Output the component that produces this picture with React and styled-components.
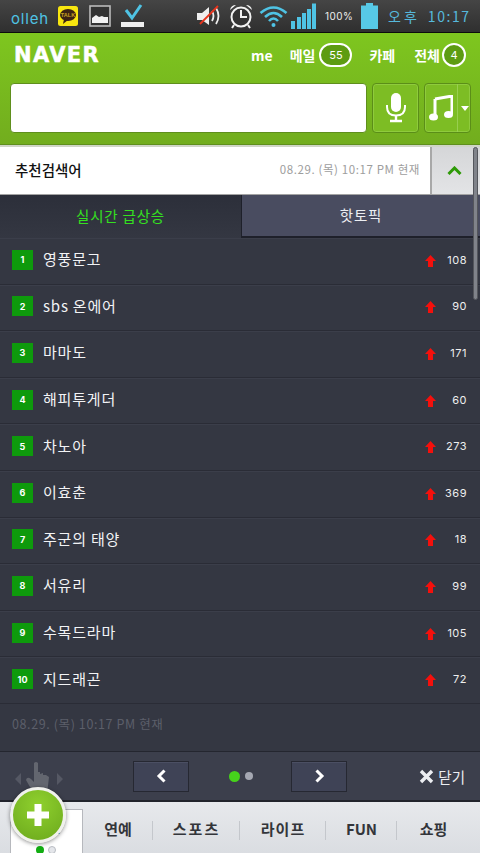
import React from "react";
import styled, { createGlobalStyle } from "styled-components";

const Global = createGlobalStyle`
  html, body { margin: 0; padding: 0; background: #343742; }
  * { box-sizing: border-box; }
  body { font-family: "Noto Sans CJK KR", "Noto Sans", sans-serif; }
`;
const Page = styled.div`
  position: relative; width: 480px; height: 853px; overflow: hidden;
  display: flex; flex-direction: column; background: #343742;
`;
const StatusBar = styled.div`
  height: 33px; flex: none; display: flex; align-items: center; padding: 0 0 0 11px;
  background: linear-gradient(#454545, #2f2f2f); border-bottom: 1px solid #0c0c0c;
`;
const StatusLogo = styled.span`
  font: 400 15px "Inter", sans-serif; color: #4fc3e4; letter-spacing: .8px; width: 47px; flex: none; margin-top: 4px;
`;
const StatusIcon = styled.svg`flex: none; display: block; margin-left: ${p => p.$ml || 0}px;`;
const Pct = styled.span`font: 400 10px "Inter", sans-serif; color: #eee; flex: none; width: 44px; padding-left: 8px; letter-spacing: .4px; white-space: nowrap;`;
const Clock = styled.span`font: 400 14px "Noto Sans CJK KR", sans-serif; color: #56b9dc; letter-spacing: 1.6px; margin-left: 10px; white-space: nowrap; flex: none;`;
const ClockAmPm = styled.span`letter-spacing: 3px; margin-right: 8px;`;

const Header = styled.header`
  height: 112px; flex: none; padding: 4px 9px 0 10px;
  background: linear-gradient(#7ec61f, #72ad1e); border-bottom: 1px solid #5f8f1d;
`;
const TopRow = styled.div`display: flex; align-items: center; justify-content: space-between; height: 36px;`;
const Logo = styled.div`font: 700 21px "DejaVu Sans", sans-serif; color: #fff; letter-spacing: 1.4px; margin: 0 0 0 4px; -webkit-text-stroke: .5px #fff;`;
const TopLinks = styled.nav`display: flex; align-items: center; color: #fff; font-size: 14px; font-weight: 700; margin-right: 5px;`;
const TopLink = styled.span`margin-left: ${p => p.$ml}px; display: flex; align-items: center; white-space: nowrap;`;
const Count = styled.span`
  display: inline-flex; align-items: center; justify-content: center; height: 24px; width: ${p => p.$w}px;
  border: 2px solid #fff; border-radius: 12px; background: #5d9c12; font: 400 11px "Inter", sans-serif; margin-left: ${p => p.$ml}px;
`;
const SearchRow = styled.div`display: flex; gap: 5px; margin-top: 10px; height: 50px;`;
const SearchInput = styled.div`flex: 1; background: #fff; border: 1px solid #5f8f1d; border-radius: 4px;`;
const SearchBtn = styled.div`
  width: 47px; flex: none; display: flex; align-items: center; justify-content: center;
  background: #7dbd24; border: 1px solid #5b8e18; border-radius: 4px; box-shadow: inset 0 0 0 1px #8fcb3d;
`;
const MusicBtn = styled(SearchBtn)`justify-content: flex-start;`;
const MusicMain = styled.div`width: 33px; display: flex; justify-content: center; border-right: 1px solid #98cf50; height: 100%; align-items: center;`;
const Caret = styled.span`margin-left: 3px; width: 0; height: 0; border: 4px solid transparent; border-top: 5px solid #fff; border-bottom: 0;`;

const Suggest = styled.div`
  height: 50px; flex: none; display: flex; align-items: stretch; background: #fff;
  border-top: 2px solid #cfd5c6; border-bottom: 1px solid #a3a3a3;
`;
const SuggestTitle = styled.div`font-size: 14.5px; font-weight: 500; color: #111; padding-left: 15px; line-height: 45px; flex: 1;`;
const Stamp = styled.div`font: 400 ${p => p.$size || 11.5}px "Noto Sans CJK KR", sans-serif; color: ${p => p.$c || "#9d9d9d"}; letter-spacing: .6px; line-height: 45px; white-space: nowrap;`;
const CollapseBtn = styled.div`
  width: 50px; margin-left: 10px; flex: none; display: flex; align-items: center; justify-content: center; padding-right: 4px;
  background: linear-gradient(#d5d6d8, #e3e4e6); border-left: 2px solid #a8a8a8;
`;

const Tabs = styled.div`height: 43px; flex: none; display: flex; background: #343742;`;
const Tab = styled.div`
  flex: none; width: ${p => p.$w}px; display: flex; align-items: center; justify-content: center; font-size: 14.5px; letter-spacing: .8px;
  color: ${p => p.$active ? "#35e01f" : "#eceef2"};
  background: ${p => p.$active ? "linear-gradient(#2c2f3a, #343742)" : "#494c60"};
  border-left: ${p => p.$active ? "none" : "1px solid #1e202a"};
  border-bottom: ${p => p.$active ? "none" : "2px solid #1e202a"};
  padding-bottom: 2px;
`;

const List = styled.ol`margin: 0; padding: 0; list-style: none; height: 466px; flex: none; display: flex; flex-direction: column;`;
const Row = styled.li`
  flex: 1; display: flex; align-items: center; padding: 0 13px 2px 12px;
  border-bottom: 1px solid #2a2c36; box-shadow: 0 1px 0 #3b3e4a inset;
`;
const Rank = styled.span`
  width: 21px; height: 20px; flex: none; display: flex; align-items: center; justify-content: center;
  background: #0e9a0c; color: #fff; font: 700 9px "Inter", sans-serif;
`;
const Term = styled.span`font-size: 15px; color: #f2f3f5; margin-left: 10px; flex: 1; letter-spacing: .8px; margin-top: -2px;`;
const Arrow = styled.svg`flex: none; display: block; margin-top: 2px;`;
const Delta = styled.span`font: 400 11px "Inter", sans-serif; color: #eee; width: 31px; text-align: right; letter-spacing: .5px;`;

const DateRow = styled.div`height: 48px; flex: none; padding: 0 12px 8px; display: flex; align-items: center; border-bottom: 1px solid #24262f;`;

const Pager = styled.div`
  height: 50px; flex: none; display: flex; align-items: center; background: #3c3f4c; border-bottom: 2px solid #22242c;
  padding: 0 14px;
`;
const HandIcon = styled.svg`flex: none; display: block; width: 50px; margin-top: 4px;`;
const PageBtn = styled.div`
  width: 56px; height: 31px; flex: none; display: flex; align-items: center; justify-content: center; margin-left: ${p => p.$ml || 0}px;
  background: #3f4356; border: 1px solid #262832; box-shadow: inset 0 1px 0 #4b4f63;
`;
const Dots = styled.div`display: flex; align-items: center; gap: 5px; width: 102px; justify-content: center; padding-left: 1px;`;
const Dot = styled.span`
  width: ${p => p.$on ? 11 : 8}px; height: ${p => p.$on ? 11 : 8}px; border-radius: 50%;
  background: ${p => p.$on ? "#46d21b" : "#a5a8b2"};
`;
const Close = styled.div`margin-left: auto; display: flex; align-items: center; color: #eceef2; font-size: 14.5px; gap: 4px; padding-right: 1px;`;

const BottomNav = styled.nav`
  flex: 1; display: flex; align-items: flex-start;
  background: linear-gradient(#e7e9ec, #d6d9de); padding: 0 0 0 10px;
`;
const ActiveCard = styled.div`
  width: 73px; height: 60px; flex: none; margin-top: 7px; background: #fff; border: 1px solid #b6b8bd;
  display: flex; flex-direction: column; align-items: center; padding-top: 2px; gap: 3px;
`;
const CardLabel = styled.span`font-size: 15px; font-weight: 700; color: #222; line-height: 31px; height: 31px; margin-left: -1px;`;
const CardDots = styled.div`display: flex; gap: 4px; margin-top: 0; margin-left: -1px;`;
const PageDot = styled.span`
  width: 8px; height: 8px; border-radius: 50%; background: ${p => p.$on ? "#12ad12" : "#e4e6ea"};
  border: ${p => p.$on ? "none" : "1px solid #b9bcc3"};
`;
const NavItems = styled.div`flex: 1; display: flex; height: 51px;`;
const NavItem = styled.div`
  width: ${p => p.$w}px; flex: none; display: flex; align-items: center; justify-content: center; position: relative;
  font-size: 15px; font-weight: 700; color: #33353a; padding-top: 1px; letter-spacing: ${p => p.$ls || 0}px;
  &:not(:last-child)::after {
    content: ""; position: absolute; right: 0; top: 19px; height: 19px; width: 1px; background: #c4c7cc;
  }
`;
const Fab = styled.div`
  position: absolute; left: 10px; top: 787px; width: 56px; height: 56px; border-radius: 50%;
  background: radial-gradient(circle at 50% 30%, #8fd02e, #6ba81c); border: 3px solid #f0f1ec;
  box-shadow: 0 1px 4px rgba(0,0,0,.45); display: flex; align-items: center; justify-content: center;
`;
const Scrollbar = styled.div`
  position: absolute; left: 473px; top: 147px; width: 5px; height: 153px; border-radius: 3px; background: #80838a;
  border: 1px solid #54565c;
`;

const rows = [["영풍문고",108],["sbs 온에어",90],["마마도",171],["해피투게더",60],["차노아",273],["이효춘",369],["주군의 태양",18],["서유리",99],["수목드라마",105],["지드래곤",72]];
const stamp = "08.29. (목) 10:17 PM 현재";

export default function App() {
  return (
    <Page>
      <Global />
      <StatusBar>
        <StatusLogo>olleh</StatusLogo>
        <StatusIcon width="20" height="20" viewBox="0 0 20 20">
          <rect width="20" height="20" rx="2.5" fill="#f8e60f" />
          <ellipse cx="10" cy="9" rx="8" ry="6" fill="#3b2314" />
          <path d="M6 13 L5 18 L10 14Z" fill="#3b2314" />
          <text x="10" y="11" fontSize="5.5" textAnchor="middle" fill="#c9a421" fontFamily="Liberation Sans" fontWeight="700">TALK</text>
        </StatusIcon>
        <StatusIcon width="22" height="22" viewBox="0 0 22 22" $ml="11">
          <rect x="1" y="1" width="20" height="20" fill="#333" stroke="#bbb" strokeWidth="1.6" />
          <path d="M3 18 V13 L7 10 L10 12 L13 11 L15 12 L19 12 V18Z" fill="#f2f2f2" />
        </StatusIcon>
        <StatusIcon width="24" height="24" viewBox="0 0 24 24" $ml="10">
          <path d="M5 6 L11 14 L20 1" fill="none" stroke="#4fc3e4" strokeWidth="3" />
          <rect x="0" y="18" width="23" height="5" fill="#eee" />
        </StatusIcon>
        <StatusIcon width="27" height="24" viewBox="0 0 27 24" $ml="51">
          <path d="M1 9 H6 L13 3 V21 L6 16 H1Z" fill="#eee" />
          <path d="M16 7 Q19 12 16 17 M20 4 Q25 12 20 20" fill="none" stroke="#eee" strokeWidth="1.8" />
          <path d="M4 20 L22 2" stroke="#e8331c" strokeWidth="1.8" />
        </StatusIcon>
        <StatusIcon width="24" height="26" viewBox="0 0 24 26" $ml="6">
          <circle cx="12" cy="14" r="9.5" fill="#333" stroke="#f2f2f2" strokeWidth="2" />
          <path d="M12 7 V14 H18" fill="none" stroke="#f2f2f2" strokeWidth="2" />
          <path d="M1 7 Q2 2 7 2Z M23 7 Q22 2 17 2Z" fill="#f2f2f2" />
          <path d="M5 22 L3 25 M19 22 L21 25" stroke="#f2f2f2" strokeWidth="2" />
        </StatusIcon>
        <StatusIcon width="29" height="24" viewBox="0 0 29 24" $ml="6">
          <path d="M1.5 9 Q14.5 -2 27.5 9 M6 13 Q14.5 5 23 13 M10 17 Q14.5 12 19 17" fill="none" stroke="#4fc3e4" strokeWidth="2.6" />
          <circle cx="14.5" cy="21" r="2" fill="#4fc3e4" />
        </StatusIcon>
        <StatusIcon width="26" height="26" viewBox="0 0 26 26" $ml="3">
          <path d="M0 18h4v8H0z M6 14h4v12H6z M11 10h4v16h-4z M16 6h4v20h-4z M21 0.5h4V26h-4z" fill="#4fc3e4" />
        </StatusIcon>
        <Pct>100%</Pct>
        <StatusIcon width="17" height="26" viewBox="0 0 17 26">
          <path d="M5 0 H12 V2.5 H17 V26 H0 V2.5 H5Z" fill="#57c9e6" />
        </StatusIcon>
        <Clock><ClockAmPm>오후</ClockAmPm>10:17</Clock>
      </StatusBar>

      <Header>
        <TopRow>
          <Logo>NAVER</Logo>
          <TopLinks>
            <TopLink>me</TopLink>
            <TopLink $ml="17">메일<Count $w={33} $ml={4}>55</Count></TopLink>
            <TopLink $ml="17">카페</TopLink>
            <TopLink $ml="19">전체<Count $w={24} $ml={2}>4</Count></TopLink>
          </TopLinks>
        </TopRow>
        <SearchRow>
          <SearchInput />
          <SearchBtn>
            <svg width="22" height="30" viewBox="0 0 22 30">
              <rect x="6" y="0" width="10" height="19" rx="5" fill="#fff" />
              <path d="M2 12 V14 Q2 22.5 11 22.5 Q20 22.5 20 14 V12" fill="none" stroke="#fff" strokeWidth="2" />
              <path d="M11 22 V27 M5 28 H17" stroke="#fff" strokeWidth="2.4" />
            </svg>
          </SearchBtn>
          <MusicBtn>
            <MusicMain>
              <svg width="24" height="26" viewBox="0 0 24 26">
                <path d="M6 4 L23 1 V19" fill="none" stroke="#fff" strokeWidth="3" />
                <path d="M6 4 V22" stroke="#fff" strokeWidth="3" />
                <ellipse cx="4.5" cy="22" rx="4.5" ry="3.6" fill="#fff" />
                <ellipse cx="19.5" cy="19.5" rx="4.5" ry="3.6" fill="#fff" />
              </svg>
            </MusicMain>
            <Caret />
          </MusicBtn>
        </SearchRow>
      </Header>

      <Suggest>
        <SuggestTitle>추천검색어</SuggestTitle>
        <Stamp>{stamp}</Stamp>
        <CollapseBtn>
          <svg width="15" height="9" viewBox="0 0 15 9"><path d="M1.5 8 L7.5 2 L13.5 8" fill="none" stroke="#2e9a07" strokeWidth="3" /></svg>
        </CollapseBtn>
      </Suggest>

      <Tabs>
        <Tab $active $w={241}>실시간 급상승</Tab>
        <Tab $w={239}>핫토픽</Tab>
      </Tabs>

      <List>
        {rows.map(([t, n], i) => (
          <Row key={t}>
            <Rank>{i + 1}</Rank>
            <Term>{t}</Term>
            <Arrow width="11" height="12" viewBox="0 0 11 12"><path d="M5.5 0 L11 6 H8 V12 H3 V6 H0Z" fill="#f4100c" /></Arrow>
            <Delta>{n}</Delta>
          </Row>
        ))}
      </List>

      <DateRow><Stamp $c="#5c5f6a" $size={12.5}>{stamp}</Stamp></DateRow>

      <Pager>
        <HandIcon height="32" viewBox="0 0 50 32">
          <path d="M1 17 L7 11 V23Z M49 17 L43 11 V23Z" fill="#555864" />
          <path d="M20 1 Q22 -1 24 1 V10 L26 10 V12 L29 11 V13 L32 13 L35 15 L33 32 H20 L12 18 Q13 14 17 17 L20 20Z" fill="#63666f" />
        </HandIcon>
        <PageBtn $ml={69}>
          <svg width="11" height="14" viewBox="0 0 11 14"><path d="M8.5 1.5 L3 7 L8.5 12.5" fill="none" stroke="#fff" strokeWidth="3" /></svg>
        </PageBtn>
        <Dots><Dot $on /><Dot /></Dots>
        <PageBtn>
          <svg width="11" height="14" viewBox="0 0 11 14"><path d="M2.5 1.5 L8 7 L2.5 12.5" fill="none" stroke="#fff" strokeWidth="3" /></svg>
        </PageBtn>
        <Close>
          <svg width="15" height="15" viewBox="0 0 15 15"><path d="M2 2 L13 13 M13 2 L2 13" stroke="#eceef2" strokeWidth="3.4" /></svg>
          닫기
        </Close>
      </Pager>

      <BottomNav>
        <ActiveCard>
          <CardLabel>뉴스</CardLabel>
          <CardDots><PageDot $on /><PageDot /></CardDots>
        </ActiveCard>
        <NavItems>
          <NavItem $w={70}>연예</NavItem>
          <NavItem $w={87} $ls={2}>스포츠</NavItem>
          <NavItem $w={86} $ls={1}>라이프</NavItem>
          <NavItem $w={71}>FUN</NavItem>
          <NavItem $w={73}>쇼핑</NavItem>
        </NavItems>
      </BottomNav>

      <Fab>
        <svg width="24" height="24" viewBox="0 0 24 24"><path d="M8.5 1 H15.5 V8.5 H23 V15.5 H15.5 V23 H8.5 V15.5 H1 V8.5 H8.5Z" fill="#fff" /></svg>
      </Fab>
      <Scrollbar />
    </Page>
  );
}
